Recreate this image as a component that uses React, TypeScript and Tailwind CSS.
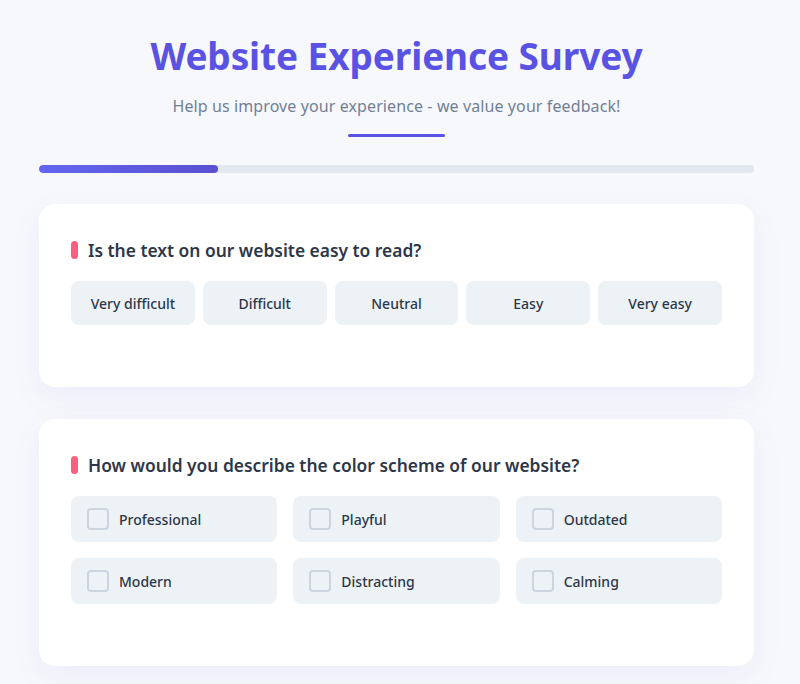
import { useState } from "react"

const readOptions = ["Very difficult", "Difficult", "Neutral", "Easy", "Very easy"]
const colorOptions = ["Professional", "Playful", "Outdated", "Modern", "Distracting", "Calming"]

function QuestionTitle({ children }: { children: React.ReactNode }) {
  return (
    <div className="flex items-center gap-[10px] mb-[17px]">
      <span className="w-[7px] h-[18px] rounded-full bg-[#f8607d]" />
      <h2 className="text-[17.4px] leading-7 font-semibold text-[#2d3748]">{children}</h2>
    </div>
  )
}

export default function App() {
  const [rating, setRating] = useState<string | null>(null)
  const [checked, setChecked] = useState<string[]>([])

  const toggle = (opt: string) => {
    setChecked((prev) => (prev.includes(opt) ? prev.filter((o) => o !== opt) : [...prev, opt]))
  }

  return (
    <div
      className="min-h-[684px] bg-[#f7f8fb] pl-[39px] pr-[46px] pt-[30px] pb-10"
      style={{ fontFamily: '"Noto Sans", "Open Sans", sans-serif' }}
    >
      <header className="flex flex-col items-center">
        <h1 className="text-[37px] leading-[52px] font-bold text-[#5a52e3] tracking-[-0.1px]">
          Website Experience Survey
        </h1>
        <p className="mt-[12px] text-[16px] leading-6 text-[#718096] tracking-[0.1px]">
          Help us improve your experience - we value your feedback!
        </p>
        <div className="mt-[16px] w-[97px] h-[3px] rounded-full bg-[#5a52e3]" />
      </header>

      <div className="mt-[28px] h-2 w-full rounded-full bg-[#e2e8f0] overflow-hidden">
        <div className="h-full w-1/4 rounded-full bg-gradient-to-r from-[#6366f1] to-[#5a4fcf]" />
      </div>

      <div className="mt-[31px] rounded-2xl bg-white px-8 pt-8 pb-[62px] shadow-[0_10px_30px_rgba(99,102,241,0.08)]">
        <QuestionTitle>Is the text on our website easy to read?</QuestionTitle>
        <div className="grid grid-cols-5 gap-2">
          {readOptions.map((opt) => (
            <button
              key={opt}
              onClick={() => setRating(opt)}
              className={
                "h-11 rounded-lg text-[14px] font-medium text-[#2d3748] " +
                (rating === opt ? "bg-[#e0e7ff]" : "bg-[#edf2f7]")
              }
            >
              {opt}
            </button>
          ))}
        </div>
      </div>

      <div className="mt-8 rounded-2xl bg-white px-8 pt-8 pb-[62px] shadow-[0_10px_30px_rgba(99,102,241,0.08)]">
        <QuestionTitle>How would you describe the color scheme of our website?</QuestionTitle>
        <div className="grid grid-cols-3 gap-4">
          {colorOptions.map((opt) => (
            <label
              key={opt}
              onClick={() => toggle(opt)}
              className="flex items-center gap-[10px] h-[46px] px-4 rounded-lg bg-[#edf2f7] cursor-pointer"
            >
              <span
                className={
                  "w-[22px] h-[22px] rounded border-2 " +
                  (checked.includes(opt) ? "border-[#5a52e3] bg-[#5a52e3]" : "border-[#cbd5e0]")
                }
              />
              <span className="text-[14px] font-medium text-[#2d3748]">{opt}</span>
            </label>
          ))}
        </div>
      </div>
    </div>
  )
}
